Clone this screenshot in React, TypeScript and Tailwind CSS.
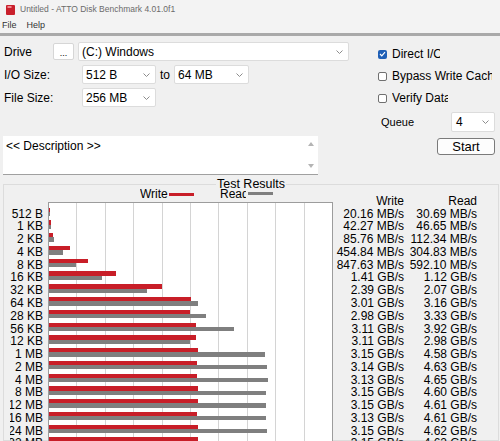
import React from "react";

type Row = { size: string; write: string; read: string };

const results: Row[] = [
  { size: "512 B", write: "20.16 MB/s", read: "30.69 MB/s" },
  { size: "1 KB", write: "42.27 MB/s", read: "46.65 MB/s" },
  { size: "2 KB", write: "85.76 MB/s", read: "112.34 MB/s" },
  { size: "4 KB", write: "454.84 MB/s", read: "304.83 MB/s" },
  { size: "8 KB", write: "847.63 MB/s", read: "592.10 MB/s" },
  { size: "16 KB", write: "1.41 GB/s", read: "1.12 GB/s" },
  { size: "32 KB", write: "2.39 GB/s", read: "2.07 GB/s" },
  { size: "64 KB", write: "3.01 GB/s", read: "3.16 GB/s" },
  { size: "128 KB", write: "2.98 GB/s", read: "3.33 GB/s" },
  { size: "256 KB", write: "3.11 GB/s", read: "3.92 GB/s" },
  { size: "512 KB", write: "3.11 GB/s", read: "2.98 GB/s" },
  { size: "1 MB", write: "3.15 GB/s", read: "4.58 GB/s" },
  { size: "2 MB", write: "3.14 GB/s", read: "4.63 GB/s" },
  { size: "4 MB", write: "3.13 GB/s", read: "4.65 GB/s" },
  { size: "8 MB", write: "3.15 GB/s", read: "4.60 GB/s" },
  { size: "12 MB", write: "3.15 GB/s", read: "4.61 GB/s" },
  { size: "16 MB", write: "3.13 GB/s", read: "4.61 GB/s" },
  { size: "24 MB", write: "3.15 GB/s", read: "4.62 GB/s" },
  { size: "32 MB", write: "3.15 GB/s", read: "4.62 GB/s" },
  { size: "48 MB", write: "3.14 GB/s", read: "4.63 GB/s" },
  { size: "64 MB", write: "3.15 GB/s", read: "4.61 GB/s" },
];

// chart runs 0..6 GB/s across the frame
const MAX_GB = 6;

const toGB = (s: string) => {
  const [n, unit] = s.split(" ");
  return unit.startsWith("MB") ? parseFloat(n) / 1024 : parseFloat(n);
};

const Chevron = () => (
  <svg width="7" height="4" viewBox="0 0 7 4" className="shrink-0">
    <path d="M0.5 0.5 L3.5 3.5 L6.5 0.5" fill="none" stroke="#8c8c8c" strokeWidth="1" />
  </svg>
);

const Combo = ({ value, className }: { value: string; className: string }) => (
  <div
    className={`h-[19px] flex items-center justify-between bg-white border border-[#dcdcdc] rounded-[2px] pl-[3px] pr-[5px] ${className}`}
  >
    <span className="whitespace-nowrap">{value}</span>
    <Chevron />
  </div>
);

const Check = ({ checked, label, width }: { checked?: boolean; label: string; width: string }) => (
  <div className="h-[22px] flex items-center pl-[18px]">
    {checked ? (
      <span className="w-[9px] h-[9px] rounded-[2px] bg-[#1f5fb6] flex items-center justify-center">
        <svg width="7" height="6" viewBox="0 0 7 6">
          <path d="M1 3 L2.8 4.8 L6 1.2" fill="none" stroke="white" strokeWidth="1.2" />
        </svg>
      </span>
    ) : (
      <span className="w-[9px] h-[9px] rounded-[2px] bg-white border border-[#707070]" />
    )}
    <span className={`ml-[5px] overflow-hidden whitespace-nowrap ${width}`}>{label}</span>
  </div>
);

export default function App() {
  return (
    <div className="w-[500px] h-[441px] overflow-hidden bg-[#f0f0f0] font-['Liberation_Sans',Arial,sans-serif] text-[12px] text-black flex flex-col">
      {/* title bar */}
      <div className="h-[19px] shrink-0 flex items-center pl-[6px] gap-[5px] bg-[#f3f3f3] text-[8.5px] text-[#6b6b6b]">
        <svg width="9" height="10" viewBox="0 0 9 10">
          <rect x="0" y="0" width="9" height="10" rx="1" fill="#c9202c" />
          <rect x="1.5" y="1" width="4" height="2" fill="#f08a90" />
        </svg>
        <span className="whitespace-nowrap">Untitled - ATTO Disk Benchmark 4.01.0f1</span>
      </div>
      {/* menu */}
      <div className="h-[14px] shrink-0 flex items-center pl-[2px] bg-[#f3f3f3] text-[9px] text-[#333]">
        <span>File</span>
        <span className="ml-[10px]">Help</span>
      </div>
      <div className="h-[3px] shrink-0 bg-[#a9a9a9]" />

      {/* settings */}
      <div className="flex shrink-0">
        <div className="w-[360px] pt-[6px] flex flex-col">
          <div className="flex items-center gap-[4px] h-[19px]">
            <span className="w-[49px] pl-[4px]">Drive</span>
            <div className="w-[21px] h-[17px] bg-white border border-[#d6d6d6] rounded-[2px] flex items-end justify-center text-[9px] leading-[12px]">
              ...
            </div>
            <Combo value="(C:) Windows" className="w-[271px]" />
          </div>
          <div className="flex items-center h-[19px] mt-[4px]">
            <span className="w-[82px] pl-[4px]">I/O Size:</span>
            <Combo value="512 B" className="w-[74px]" />
            <span className="ml-[4px] w-[14px]">to</span>
            <Combo value="64 MB" className="w-[75px]" />
          </div>
          <div className="flex items-center h-[19px] mt-[4px]">
            <span className="w-[82px] pl-[4px]">File Size:</span>
            <Combo value="256 MB" className="w-[74px]" />
          </div>
          <div className="ml-[3px] mt-[29px] w-[315px] h-[39px] bg-white border-b border-[#a0a0a0] flex">
            <div className="flex-1 pl-[3px] pt-[3px] leading-[14px]">&lt;&lt; Description &gt;&gt;</div>
            <div className="w-[14px] flex flex-col items-center justify-between py-[6px]">
              <svg width="6" height="4" viewBox="0 0 6 4">
                <path d="M0 4 L3 0 L6 4 Z" fill="#b4b4b4" />
              </svg>
              <svg width="6" height="4" viewBox="0 0 6 4">
                <path d="M0 0 L3 4 L6 0 Z" fill="#b4b4b4" />
              </svg>
            </div>
          </div>
        </div>

        <div className="flex-1 pt-[7px] flex flex-col">
          <Check checked label="Direct I/O" width="w-[48px]" />
          <Check label="Bypass Write Cache" width="w-[100px]" />
          <Check label="Verify Data" width="w-[56px]" />
          <div className="flex items-center mt-[3px] h-[20px]">
            <span className="pl-[21px] w-[91px] text-[11px]">Queue</span>
            <Combo value="4" className="w-[44px] h-[20px] pl-[4px]" />
          </div>
          <button className="mt-[6px] ml-[77px] w-[58px] h-[17px] bg-[#fdfdfd] border border-[#7a7a7a] rounded-[3px] text-[13px] leading-[15px] flex items-center justify-center">
            Start
          </button>
        </div>
      </div>

      {/* results */}
      <fieldset className="mt-[2.8px] ml-[3px] mr-[1px] border border-[#dcdcdc] flex-1 min-h-0">
        <legend className="mx-auto px-[1px] text-[12.5px] leading-[13px]">Test Results</legend>
        <div className="-mt-[3px] flex">
          {/* sizes */}
          <div className="ml-[6px] w-[33px] pt-[19.85px] flex flex-col">
            {results.map((r) => (
              <div key={r.size} className="h-[12.77px] leading-[12.77px] flex justify-end overflow-hidden">
                <span className="whitespace-nowrap">{r.size}</span>
              </div>
            ))}
          </div>

          {/* chart */}
          <div className="ml-[5px] w-[285px] flex flex-col">
            <div className="h-[13px] leading-[13px] flex items-start pl-[92px]">
              <span className="w-[28px] overflow-hidden whitespace-nowrap">Write</span>
              <span className="ml-[1.3px] mt-[5px] w-[25px] h-[3px] bg-[#c81e28]" />
              <span className="ml-[25.7px] w-[26px] overflow-hidden whitespace-nowrap">Read</span>
              <span className="ml-[2.3px] mt-[4.2px] w-[24.4px] h-[3.3px] bg-[#7f7f7f]" />
            </div>
            <div className="relative mt-[0.9px] h-[300px] bg-white border border-[#9c9c9c] pt-[4.95px]">
              <div className="absolute inset-0 flex">
                {Array.from({ length: 10 }).map((_, i) => (
                  <div key={i} className="flex-1 border-r border-[#d4d4d4] last:border-r-0" />
                ))}
              </div>
              <div className="relative flex flex-col">
                {results.map((r) => (
                  <div key={r.size} className="h-[12.77px] flex flex-col">
                    <div
                      className="h-[4.3px] bg-[#c81e28]"
                      style={{ width: `${(toGB(r.write) / MAX_GB) * 100}%` }}
                    />
                    <div
                      className="h-[4.3px] bg-[#7f7f7f]"
                      style={{ width: `${(toGB(r.read) / MAX_GB) * 100}%` }}
                    />
                  </div>
                ))}
              </div>
            </div>
          </div>

          {/* numbers */}
          <div className="pt-[7.1px] flex">
            <div className="w-[71px] flex flex-col items-end">
              <div className="h-[12.77px] leading-[12.77px]">Write</div>
              {results.map((r) => (
                <div key={r.size} className="h-[12.77px] leading-[12.77px] whitespace-nowrap">
                  {r.write}
                </div>
              ))}
            </div>
            <div className="w-[73px] flex flex-col items-end">
              <div className="h-[12.77px] leading-[12.77px]">Read</div>
              {results.map((r) => (
                <div key={r.size} className="h-[12.77px] leading-[12.77px] whitespace-nowrap">
                  {r.read}
                </div>
              ))}
            </div>
          </div>
        </div>
      </fieldset>
    </div>
  );
}
